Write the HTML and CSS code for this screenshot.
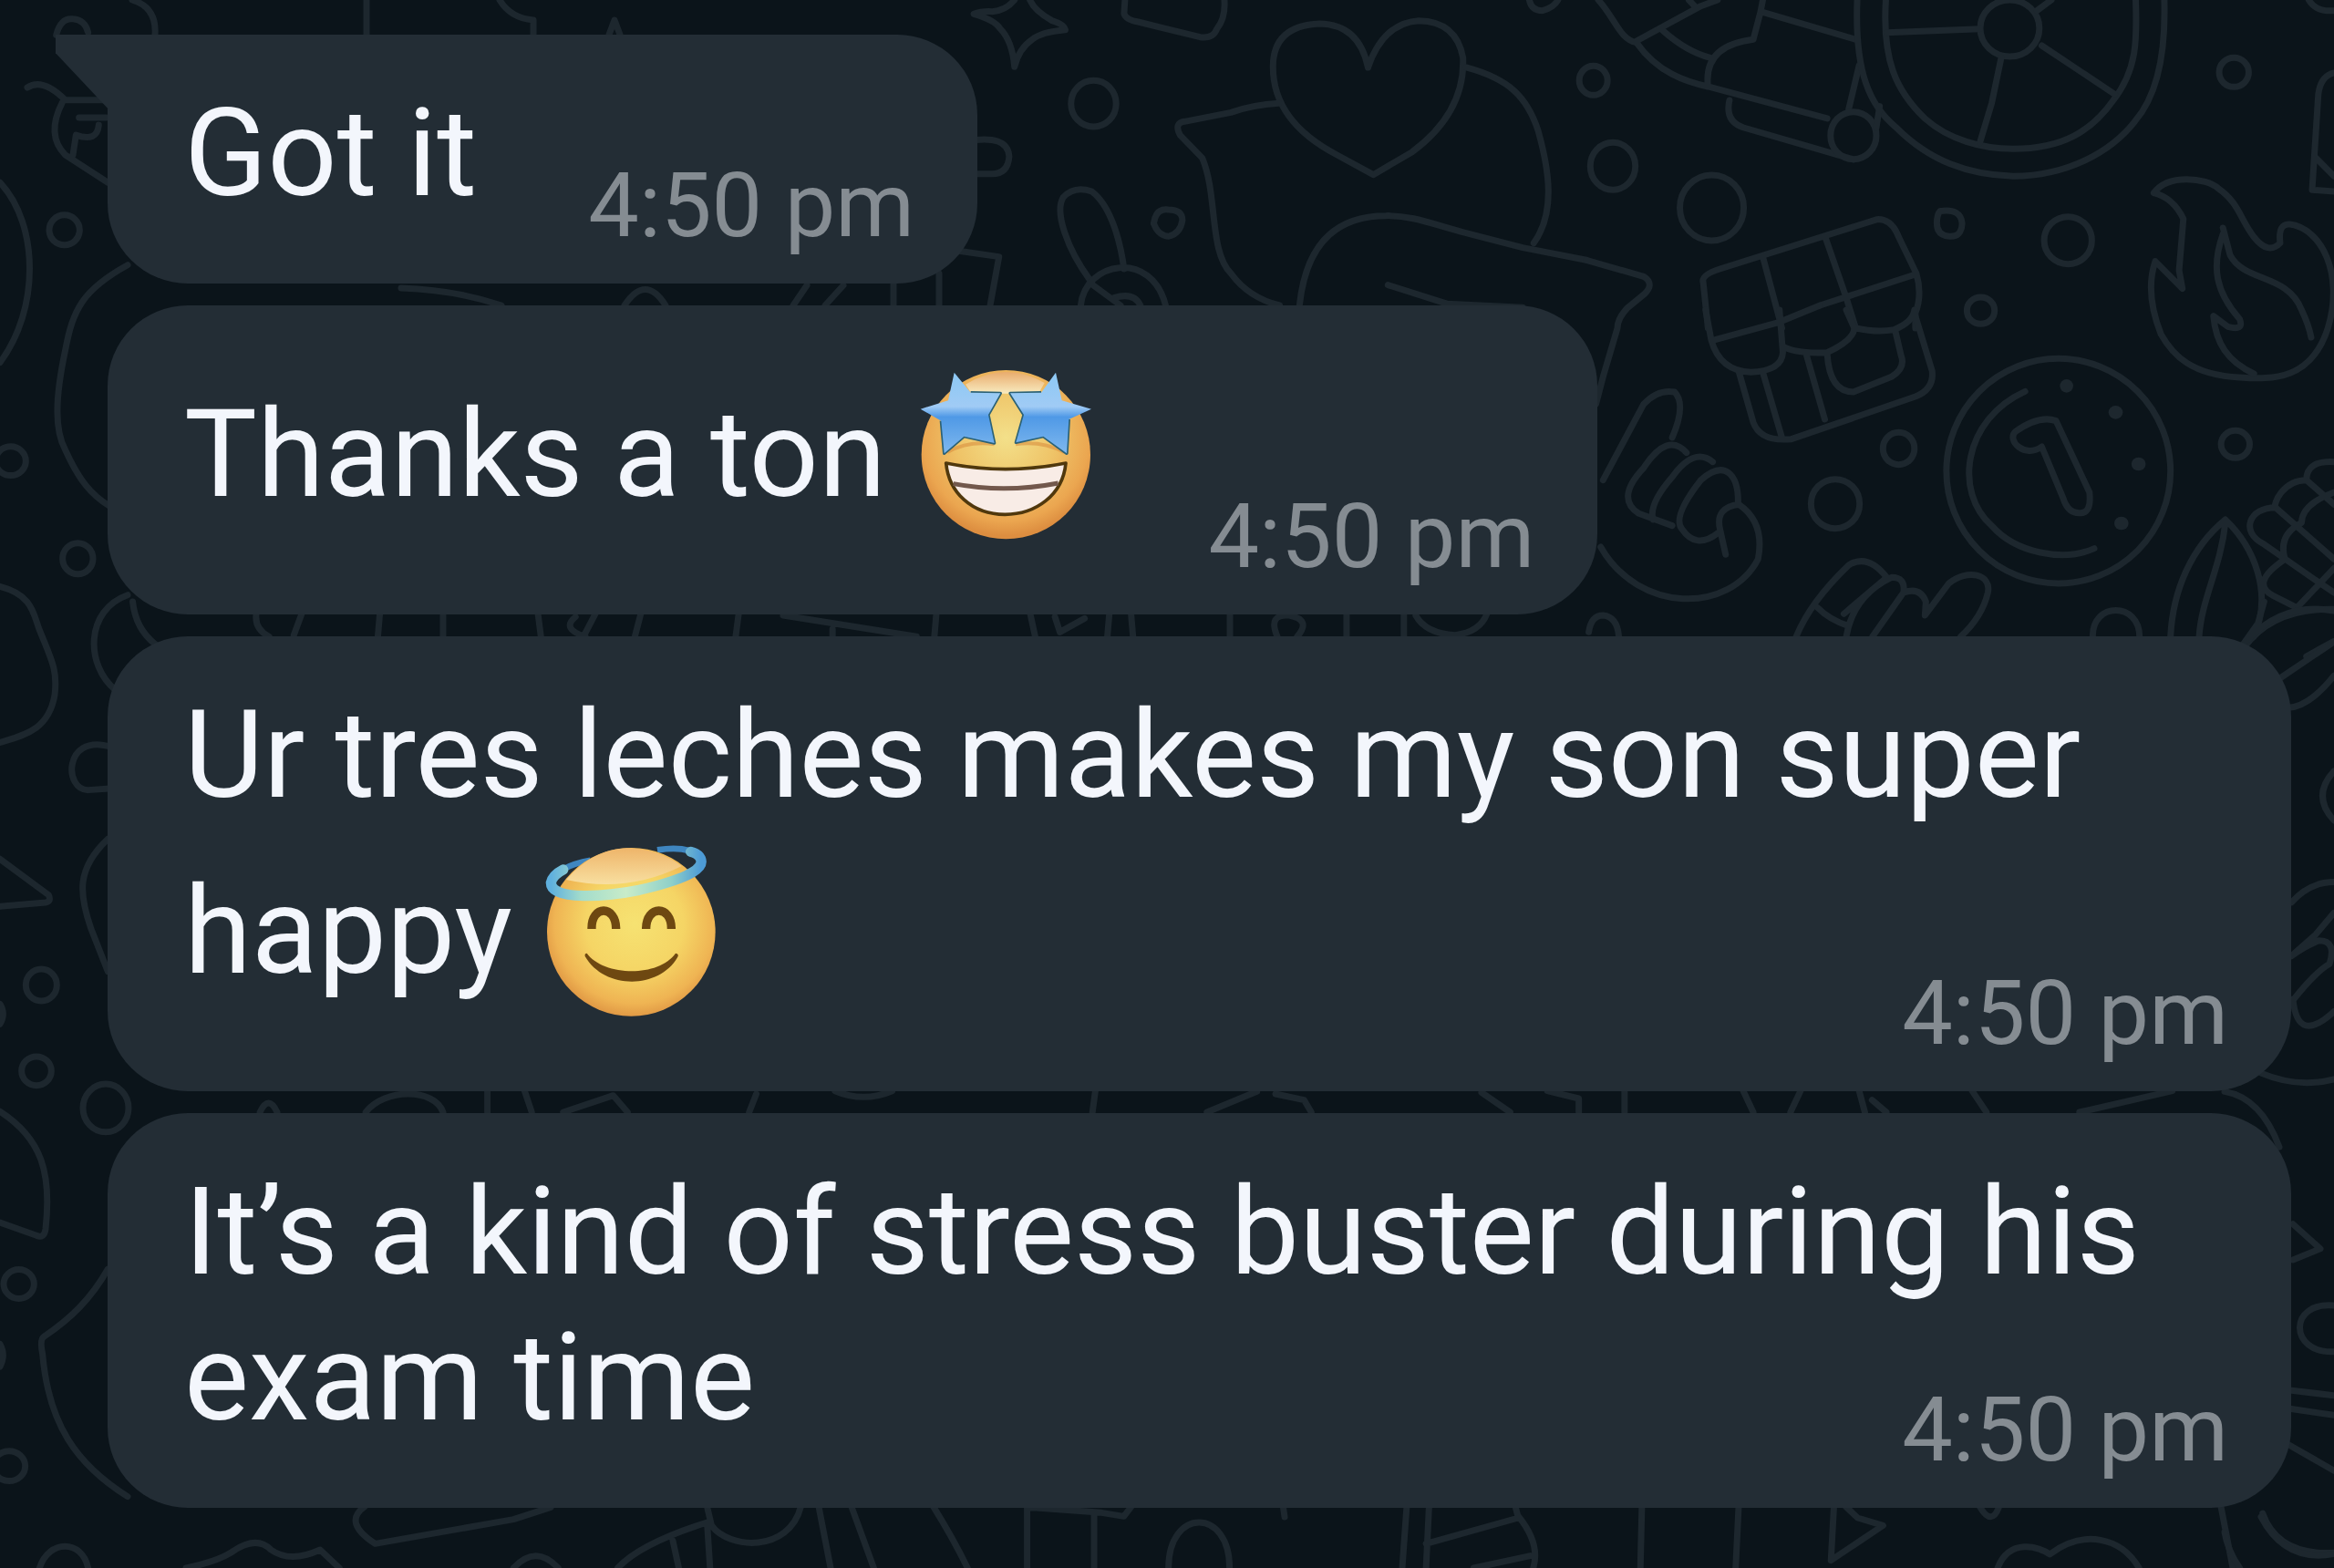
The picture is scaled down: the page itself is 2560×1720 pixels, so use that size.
FILE: index.html
```html
<!DOCTYPE html>
<html lang="en">
<head>
    <meta charset="UTF-8">
    <meta name="viewport" content="width=device-width, initial-scale=1.0">
    <title>Chat</title>
    <link rel="stylesheet" href="styles.css">
</head>
<body>

    <svg class="wallpaper" viewBox="0 0 2560 1720" preserveAspectRatio="xMidYMid slice" aria-hidden="true">
        <!-- star, heart and hand -->
        <g transform="translate(1040 0) scale(.4847 .3333)">
            <path d="M150 0Q130 35 100 38Q75 36 58 46Q105 65 118 95Q145 135 150 220Q160 160 190 130Q210 105 265 98Q262 80 235 68Q195 35 185 0"/>
            <path d="M400 0L398 45Q402 65 430 72L570 122Q600 128 608 95Q628 60 625 0"/>
            <ellipse cx="329" cy="341" rx="51" ry="76"/>
            <path d="M40 465Q135 440 138 515Q135 575 95 572L60 572"/>
            <path d="M950 222Q930 80 840 78Q735 85 735 220Q735 400 880 510L962 575L1050 500Q1170 370 1165 190Q1150 70 1065 68Q985 75 950 222"/>
            <path d="M748 340Q690 345 640 370L535 400Q510 405 525 445L575 520C610 640 590 830 640 900Q680 980 750 1005"/>
            <path d="M1172 222C1270 260 1310 320 1335 430C1360 560 1375 700 1325 800"/>
            <path d="M795 1005C810 800 880 710 990 710C1050 708 1100 740 1180 770L1300 815L1444 856"/>
            <path d="M995 938L1130 1000L1300 1012"/>
            <path d="M320 920C270 820 240 700 260 650Q285 610 325 630C370 680 390 800 398 885"/>
            <path d="M300 1005C310 860 460 820 492 1005M320 930L390 1005M375 980Q420 960 435 1005"/>
            <path d="M465 735Q470 685 498 690Q530 690 530 725Q525 770 498 778Q475 775 465 735"/>
            <path d="M20 825L115 845L95 1005"/>
            <ellipse cx="1460" cy="265" rx="32" ry="48"/>
            <ellipse cx="1504" cy="547" rx="51" ry="78"/>
            <path d="M1315 0Q1320 35 1345 35Q1370 25 1380 0"/>
        </g>
        <!-- rocket, wheel, gift and fire -->
        <g transform="translate(1740 0) scale(.523 .3333)">
            <path d="M25 0C60 60 70 130 105 140C150 240 210 270 255 285L505 390M105 135L240 20L275 0M215 0L230 25M160 100Q210 170 260 190M255 285Q245 150 350 130L365 40L370 0M370 40L565 130M572 215L550 360"/>
            <path d="M300 330Q290 400 330 420L560 525"/>
            <ellipse cx="560" cy="446" rx="48" ry="78"/>
            <path d="M568 0C562 240 595 350 650 420C720 530 800 575 895 580C1010 578 1100 500 1150 400C1200 310 1215 160 1212 0"/>
            <path d="M628 0C620 200 650 300 710 390C760 460 830 490 895 490C1000 490 1060 430 1105 330C1155 230 1155 130 1152 0"/>
            <ellipse cx="888" cy="93" rx="62" ry="93"/>
            <path d="M630 107L825 95M945 35L975 0M955 150L1108 310M870 190L850 340L825 470M608 420L615 350"/>
            <ellipse cx="263" cy="684" rx="67" ry="108"/>
            <path d="M742 695Q785 685 788 735Q787 780 762 778Q735 775 735 735Q735 705 742 695"/>
            <ellipse cx="1010" cy="791" rx="50" ry="78"/>
            <ellipse cx="1358" cy="238" rx="31" ry="48"/>
            <ellipse cx="827" cy="1022" rx="29" ry="44"/>
            <path d="M0 856L120 910Q145 935 120 970L85 1015Q65 1050 65 1080L35 1240L20 1330"/>
            <path d="M255 1080L245 930Q240 905 280 885L610 722Q640 720 655 780L692 900Q705 970 690 1030L690 1080M370 845L410 1080M502 785L545 980L565 1080M490 1005L690 903"/>
            <path d="M1190 635C1220 570 1300 585 1325 620C1370 670 1370 720 1400 780Q1430 840 1455 800Q1450 735 1475 738C1540 750 1590 900 1555 1080C1520 1250 1440 1250 1370 1242C1270 1235 1230 1170 1205 1100C1180 1000 1180 920 1193 860L1250 950L1243 890L1252 720Q1230 650 1190 635"/>
            <path d="M1335 750L1350 840C1380 930 1470 900 1500 1020Q1515 1070 1520 1110M1335 770C1310 880 1320 960 1370 1050Q1380 1090 1345 1075L1315 1040C1320 1130 1345 1190 1400 1230"/>
            <path d="M1568 240Q1540 250 1535 310L1522 625L1568 630M1530 520L1568 580M1515 0Q1530 40 1568 35"/>
        </g>
        <!-- hands, coin and corn -->
        <g transform="translate(1740 340) scale(.523 .3333)">
            <path d="M250 0L262 100Q280 200 345 205Q410 200 412 140L405 0M265 100L405 40L490 -15M412 120Q440 145 505 140Q560 100 562 60L545 0M565 60Q610 75 645 65Q685 40 688 0M320 205L350 370Q365 435 430 425L690 285Q730 260 725 200L690 20M370 205L410 420M460 140L500 360M505 145Q510 270 560 270L640 220Q670 190 660 150L648 70"/>
            <path d="M35 560L120 310Q150 260 185 270Q210 310 180 420M30 780C110 1000 300 1000 360 820Q375 700 320 640Q270 650 280 720L292 805M210 470Q170 400 120 520Q60 620 110 670L180 710M265 500Q225 450 180 550Q130 640 140 690M318 640C320 540 290 490 240 560Q180 680 200 720Q230 790 275 735"/>
            <ellipse cx="655" cy="456" rx="33" ry="53"/>
            <ellipse cx="522" cy="638" rx="51" ry="81"/>
            <ellipse cx="990" cy="530" rx="235" ry="370"/>
            <path d="M920 268C790 360 770 600 850 710C900 800 1000 830 1065 785"/>
            <path d="M955 450C920 490 880 430 900 400Q950 345 985 365L1055 600Q1060 670 1035 668Q1010 670 1000 620Z"/>
            <g class="dots">
                <ellipse cx="1007" cy="250" rx="14" ry="22"/>
                <ellipse cx="1110" cy="337" rx="15" ry="22"/>
                <ellipse cx="1158" cy="507" rx="15" ry="22"/>
                <ellipse cx="1122" cy="702" rx="15" ry="22"/>
            </g>
            <ellipse cx="1361" cy="442" rx="30" ry="45"/>
            <path d="M440 1075Q470 960 550 840Q590 800 630 880L540 1000M485 980Q510 1020 550 1040M545 1075Q560 940 640 880Q670 880 665 930L600 1075M665 930Q700 910 712 960L710 1005L760 900C800 850 850 870 842 930Q830 1010 785 1075"/>
            <path d="M1062 1075C1060 960 1160 960 1160 1075M5 1060Q10 1005 35 1005Q65 1010 68 1075"/>
            <path d="M1225 1075C1230 920 1270 780 1340 690C1400 780 1440 930 1400 1075M1340 700C1330 850 1290 950 1285 1075M1568 500Q1510 495 1510 560C1460 560 1440 640 1445 650C1390 650 1370 730 1420 770L1530 890L1568 930M1510 560L1568 640M1445 650L1568 820M1568 600Q1500 640 1500 700Q1450 740 1465 820Q1390 900 1440 940L1490 980L1568 850M1380 1110Q1440 980 1568 985M1510 1140L1568 1090"/>
        </g>
        <!-- left edge -->
        <g transform="scale(.3333 .5485)">
            <path d="M185 70Q200 35 240 38Q280 40 290 65M90 175Q140 155 215 200L350 200M205 205Q150 270 215 310L355 365M260 235L350 235M325 250Q320 285 250 270L240 310"/>
            <path d="M0 365C130 450 130 620 0 725"/>
            <ellipse cx="212" cy="460" rx="50" ry="30"/>
            <path d="M420 530C270 580 240 620 215 700C180 800 180 860 215 900C260 960 300 990 360 1012"/>
            <ellipse cx="35" cy="922" rx="50" ry="29"/>
            <ellipse cx="256" cy="1117" rx="50" ry="31"/>
            <path d="M0 1173C110 1190 110 1230 130 1260C170 1320 190 1340 180 1390C160 1460 80 1470 0 1485M420 1190C280 1220 280 1330 380 1380M355 1492C210 1470 210 1580 290 1580L360 1577"/>
        </g>
        <g transform="translate(0 860) scale(.3333 .5485)">
            <path d="M0 150L160 222Q170 235 150 237L0 245M355 110C250 170 260 220 300 290L355 375"/>
            <ellipse cx="136" cy="402" rx="51" ry="32"/>
            <ellipse cx="120" cy="574" rx="49" ry="29"/>
            <ellipse cx="348" cy="648" rx="75" ry="48"/>
            <path d="M0 655C140 710 170 780 150 890Q145 910 120 903L0 877M355 970C300 1030 230 1070 145 1105Q130 1110 140 1140C160 1280 250 1360 420 1425"/>
            <ellipse cx="62" cy="1000" rx="50" ry="29"/>
            <ellipse cx="30" cy="1364" rx="53" ry="30"/>
            <path d="M130 1568C160 1510 270 1510 290 1568M0 440Q20 460 0 480M0 1120Q20 1142 0 1165"/>
        </g>
        <!-- bottom edge -->
        <g transform="translate(0 1640) scale(1.6327 .3333)">
            <path d="M245 38Q230 90 252 160L345 80L370 40M125 240Q145 220 155 190Q172 130 182 180Q195 225 215 180L228 240M345 240Q360 160 375 240M475 38L478 100C490 180 530 190 538 38M415 240Q430 160 475 90L477 240M452 150L456 240M550 38L558 240M572 38L587 240M627 38Q640 140 650 240M690 240L690 40L740 58L755 70L760 38M735 60L735 240M785 240C785 40 826 40 826 240M862 38L863 72M945 38L942 240M960 38L958 240M958 160L1020 75L1018 38M1020 70Q1035 160 1030 240M990 240L1028 200M1103 38L1102 240M1168 38L1166 240M1232 38L1230 215L1265 100L1248 75L1240 38M1330 38Q1338 105 1343 38M1342 240C1350 140 1370 170 1377 195C1400 110 1425 140 1437 240M1492 38L1500 240M1520 60Q1530 200 1568 190"/>
        </g>
        <!-- right edge -->
        <g transform="translate(2440 660) scale(.3333 .676)">
            <path d="M60 70L110 35L130 0M80 60Q200 0 360 15M180 125L360 65M210 172Q280 170 360 120M360 275Q285 315 360 355M220 488Q280 455 360 455M220 575L300 540L360 505M220 650Q300 600 345 588Q370 550 310 550Q260 560 220 575M225 645Q240 720 360 665M120 765Q240 790 360 775M0 795Q120 805 180 885M225 1010L315 1050L225 1068M360 1142C210 1135 210 1220 360 1217M220 1280L360 1288M220 1310L360 1320M200 1365L360 1410M120 1485Q200 1560 360 1545M0 1510Q10 1540 50 1568"/>
        </g>
        <!-- strips between the messages -->
        <g transform="translate(100 1180) scale(1.5689 .3333)">
            <path d="M118 120Q124 60 130 120M192 120C205 40 240 40 246 120M277 50V120M303 50L308 120M330 120L365 65L375 120M465 60L460 120M520 50Q540 90 560 50M702 50L700 120M780 120L815 52M828 60L848 80L853 120M972 55L992 120M1018 50L1040 75V120M1072 50V120M1155 50L1162 120M1195 50L1188 120M1236 50L1240 120M1245 80L1255 120M1315 50L1325 120M1390 120L1455 50"/>
        </g>
        <g transform="translate(100 660) scale(1.0842 .3333)">
            <path d="M167 40Q165 90 180 115M213 40L205 110M292 40L290 115M356 40V115M452 40L455 115M490 50Q475 90 500 115M510 40L498 115M556 40L550 115M655 40L652 115M700 45L835 115M750 90V115M855 40L853 115M950 40L955 115M975 50L980 100L1005 55M1030 40L1028 115M1052 40L1054 115M1152 40V115M1200 115Q1190 40 1212 45Q1235 60 1220 115M1270 40V115M1328 40V115M1340 45Q1350 105 1380 110Q1405 100 1412 40M42 0Q45 90 65 140"/>
        </g>
        <path d="M440 316Q500 318 550 335M685 335Q708 300 730 335M870 335L885 313M905 335L925 313M980 335V300M1030 335V300M145 0Q172 8 170 38M402 0V38M548 0Q560 20 585 22V38M668 38L674 22L680 38"/>
    </svg>

    <main class="chat">
        <div class="message first">
            <p class="text">Got it</p>
            <time class="time">4:50 pm</time>
        </div>

        <div class="message">
            <p class="text">Thanks a ton <svg class="emoji" viewBox="84 60 576 576" role="img" aria-label="star-struck">
                <defs>
                    <radialGradient id="starFace" cx="50%" cy="40%" r="58%">
                        <stop offset="0" stop-color="#f3e08a"/>
                        <stop offset=".5" stop-color="#efc468"/>
                        <stop offset=".85" stop-color="#eba650"/>
                        <stop offset="1" stop-color="#dd8e40"/>
                    </radialGradient>
                    <linearGradient id="star" x1="0" y1="0" x2="0" y2="1">
                        <stop offset="0" stop-color="#8cc8f4"/>
                        <stop offset=".42" stop-color="#a0cbf5"/>
                        <stop offset=".55" stop-color="#4f99e6"/>
                        <stop offset="1" stop-color="#7fb8ee"/>
                    </linearGradient>
                    <linearGradient id="forehead" x1="0" y1="0" x2="0" y2="1">
                        <stop offset="0" stop-color="#e9ab6c"/>
                        <stop offset="1" stop-color="#f8ebc0"/>
                    </linearGradient>
                </defs>
                <circle cx="373" cy="356" r="278" fill="url(#starFace)"/>
                <path d="M240 125Q370 45 500 120L480 155H260Z" fill="url(#forehead)"/>
                <path d="M180 348Q250 310 335 322M405 322Q490 310 565 348" fill="none" stroke="#d9903f" stroke-width="12" opacity=".6"/>
                <g stroke="#2b6175" stroke-width="10" stroke-linejoin="round" fill="none">
                    <path d="M257 152L355 154L315 225L335 318L235 296L170 352L160 245"/>
                    <path d="M489 152L387 154L432 225L406 316L496 296L573 352L580 240"/>
                </g>
                <g fill="url(#star)">
                    <path d="M203 86L257 152L355 154L315 225L335 318L235 296L170 352L160 245L92 206L183 178Z"/>
                    <path d="M537 86L489 152L387 154L432 225L406 316L496 296L573 352L580 240L654 206L557 178Z"/>
                </g>
                <path d="M176 384Q370 424 570 384C560 490 470 553 370 553C260 553 185 480 176 384Z" fill="#f8ece6" stroke="#50380d" stroke-width="11" stroke-linejoin="round"/>
                <path d="M200 452Q370 484 545 450" fill="none" stroke="#72584c" stroke-width="15"/>
            </svg></p>
            <time class="time">4:50 pm</time>
        </div>

        <div class="message">
            <p class="text">Ur tres leches makes my son super <span class="ending">happy <svg class="emoji" viewBox="78 64 576 576" role="img" aria-label="smiling face with halo">
                <defs>
                    <radialGradient id="haloFace" cx="52%" cy="45%" r="58%">
                        <stop offset="0" stop-color="#f6e272"/>
                        <stop offset=".5" stop-color="#f5d565"/>
                        <stop offset=".82" stop-color="#efb453"/>
                        <stop offset="1" stop-color="#dc9040"/>
                    </radialGradient>
                    <linearGradient id="halo" x1="0" y1="0" x2="1" y2="0">
                        <stop offset="0" stop-color="#5fb0de"/>
                        <stop offset=".2" stop-color="#a3dccb"/>
                        <stop offset=".5" stop-color="#c8ecc9"/>
                        <stop offset=".8" stop-color="#8fd0c9"/>
                        <stop offset="1" stop-color="#4d9bd6"/>
                    </linearGradient>
                    <linearGradient id="scalp" x1="0" y1="0" x2="0" y2="1">
                        <stop offset="0" stop-color="#eeb56a"/>
                        <stop offset="1" stop-color="#f8dfa0"/>
                    </linearGradient>
                </defs>
                <path d="M100 195Q125 145 230 126M450 92C540 78 590 100 592 125" fill="none" stroke="#3f86c0" stroke-width="20"/>
                <circle cx="364" cy="362" r="277" fill="url(#haloFace)"/>
                <path d="M150 190Q240 88 350 86Q450 88 530 145Q350 235 150 190Z" fill="url(#scalp)"/>
                <path d="M140 157Q105 175 100 200C100 262 290 244 390 224C520 194 610 160 592 120Q585 105 560 98" fill="none" stroke="url(#halo)" stroke-width="34" stroke-linecap="round"/>
                <g fill="none" stroke="#6e4811" stroke-width="28">
                    <path d="M234 352C232 272 314 272 314 352"/>
                    <path d="M413 352C413 272 497 272 496 352"/>
                </g>
                <path d="M218 432C270 505 450 515 510 432Q523 434 516 446C455 552 275 552 212 442Q210 432 218 432Z" fill="#6e4811"/>
            </svg></span></p>
            <time class="time">4:50 pm</time>
        </div>

        <div class="message">
            <p class="text">It’s a kind of stress buster during his <span class="ending">exam time</span></p>
            <time class="time">4:50 pm</time>
        </div>
    </main>

</body>
</html>
```
FILE: styles.css
```css
body {
    font-family: Roboto, sans-serif;
    background-color: #0b141a;
    margin: 0;
    min-height: 100vh;
}

/* doodles behind the chat */
.wallpaper {
    position: fixed;
    top: 0;
    left: 0;
    width: 100%;
    height: 100%;
    fill: none;
    stroke: #1d272e;
    stroke-width: 7px;
    stroke-linejoin: round;
    stroke-linecap: round;
}

.wallpaper path,
.wallpaper ellipse {
    vector-effect: non-scaling-stroke;
}

.dots {
    fill: #1d272e;
    stroke: none;
}

.chat {
    position: relative;
    display: flex;
    flex-direction: column;
    align-items: flex-start;
    gap: 24px;
    padding: 38px 47px 0 118px;
}

/* text and time share one cell, the time sits in its bottom right corner */
.message {
    position: relative;
    display: grid;
    background-color: #232d35;
    border-radius: 88px;
}

.first {
    border-top-left-radius: 0;
}

.first::before {
    content: "";
    position: absolute;
    top: 0;
    left: -57px;
    width: 60px;
    height: 84px;
    background-color: #232d35;
    clip-path: polygon(0 0, 100% 0, 100% 100%, 0 24%);
}

.text {
    grid-area: 1 / 1;
    margin: 0;
    padding: 51px 69px 62px 84px;
    color: #f3f6fc;
    font-size: 134px;
    line-height: 160px;
}

/* keeps the last line clear of the time */
.text::after {
    content: "";
    display: inline-block;
    width: 480px;
}

.ending {
    white-space: nowrap;
}

.time {
    grid-area: 1 / 1;
    place-self: end;
    padding: 0 69px 26px 0;
    color: #858c92;
    font-size: 99px;
    line-height: 120px;
}

.emoji {
    width: 192px;
    height: 192px;
    margin: 14px 4px 20px 2px;
    vertical-align: -68px;
    overflow: visible;
}
```
